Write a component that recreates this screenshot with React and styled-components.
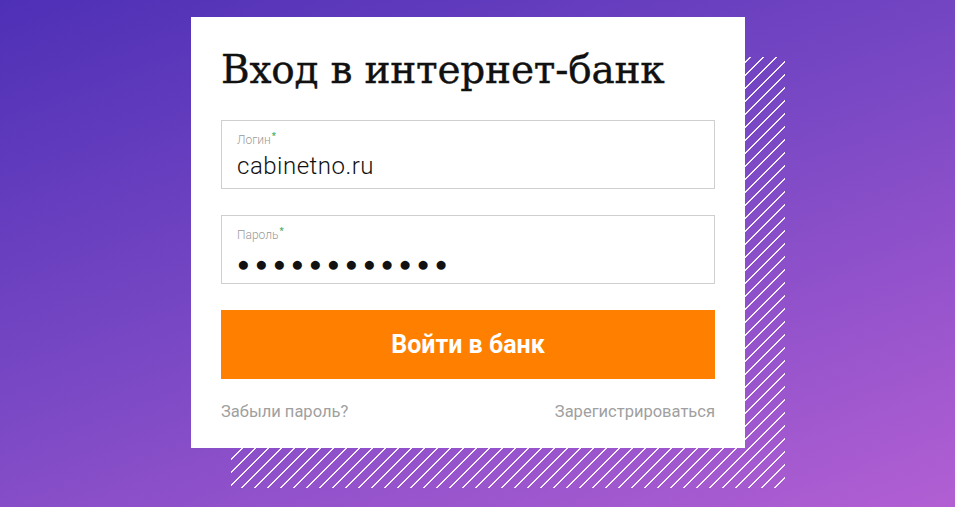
import React from 'react'
import styled, { createGlobalStyle } from 'styled-components'

const GlobalStyle = createGlobalStyle`
  html, body {
    margin: 0;
    padding: 0;
  }
  body {
    font-family: Roboto, "Noto Sans", sans-serif;
  }
`

const Page = styled.div`
  width: 955px;
  height: 507px;
  overflow: hidden;
  box-sizing: border-box;
  padding: 17px 0 0 191px;
  background: linear-gradient(160deg, #4e30b6 0%, #7747c4 45%, #b25fd3 100%);
`

const Stack = styled.div`
  position: relative;
  width: 554px;
`

const Hatch = styled.div`
  position: absolute;
  left: 40px;
  top: 40px;
  width: 554px;
  height: 431px;
  background: repeating-linear-gradient(
    135deg,
    rgba(255, 255, 255, 0) 0px,
    rgba(255, 255, 255, 0) 7.8px,
    rgba(255, 255, 255, 0.9) 7.8px,
    rgba(255, 255, 255, 0.9) 9.2px
  );
`

const Card = styled.form`
  position: relative;
  box-sizing: border-box;
  width: 554px;
  height: 431px;
  background: #fff;
  padding: 28px 30px 0;
  display: flex;
  flex-direction: column;
`

const Title = styled.h1`
  margin: 0 0 25px;
  font-family: "DejaVu Serif", "Liberation Serif", serif;
  font-weight: 400;
  font-size: 39px;
  line-height: 50px;
  color: #111;
  letter-spacing: -0.2px;
  -webkit-text-stroke: 0.4px #111;
`

const Field = styled.label`
  display: flex;
  flex-direction: column;
  box-sizing: border-box;
  height: 69px;
  border: 1px solid #cfcfcf;
  padding: 8px 15px 0;
  margin-bottom: 26px;
`

const Label = styled.span`
  font-size: 12px;
  line-height: 15px;
  font-weight: 300;
  color: #9a9a9a;

  & sup {
    color: #3fae63;
    font-weight: 700;
    font-size: 9px;
    vertical-align: 5px;
    margin-left: 1px;
  }
`

const Value = styled.span`
  margin-top: ${({ dots }) => (dots ? '8px' : '5px')};
  font-family: ${({ dots }) => (dots ? '"DejaVu Sans", sans-serif' : 'Roboto, "Noto Sans", sans-serif')};
  font-weight: 300;
  font-size: ${({ dots }) => (dots ? '21px' : '24px')};
  line-height: 26px;
  color: #111;
  letter-spacing: ${({ dots }) => (dots ? '5.3px' : '0.5px')};
`

const Button = styled.button`
  height: 69px;
  border: none;
  background: #ff8000;
  color: #fff;
  font-family: Roboto, "Noto Sans", sans-serif;
  font-weight: 700;
  font-size: 25px;
  cursor: pointer;
`

const Links = styled.div`
  display: flex;
  justify-content: space-between;
  margin-top: 23px;
`

const Link = styled.a`
  font-size: 16.5px;
  line-height: 20px;
  color: #a0a0a0;
  text-decoration: none;
`

export default function App() {
  return (
    <>
      <GlobalStyle />
      <Page>
        <Stack>
          <Hatch />
          <Card onSubmit={(e) => e.preventDefault()}>
            <Title>Вход в интернет-банк</Title>
            <Field>
              <Label>
                Логин<sup>*</sup>
              </Label>
              <Value>cabinetno.ru</Value>
            </Field>
            <Field>
              <Label>
                Пароль<sup>*</sup>
              </Label>
              <Value dots>●●●●●●●●●●●●</Value>
            </Field>
            <Button type="submit">Войти в банк</Button>
            <Links>
              <Link href="#">Забыли пароль?</Link>
              <Link href="#">Зарегистрироваться</Link>
            </Links>
          </Card>
        </Stack>
      </Page>
    </>
  )
}
